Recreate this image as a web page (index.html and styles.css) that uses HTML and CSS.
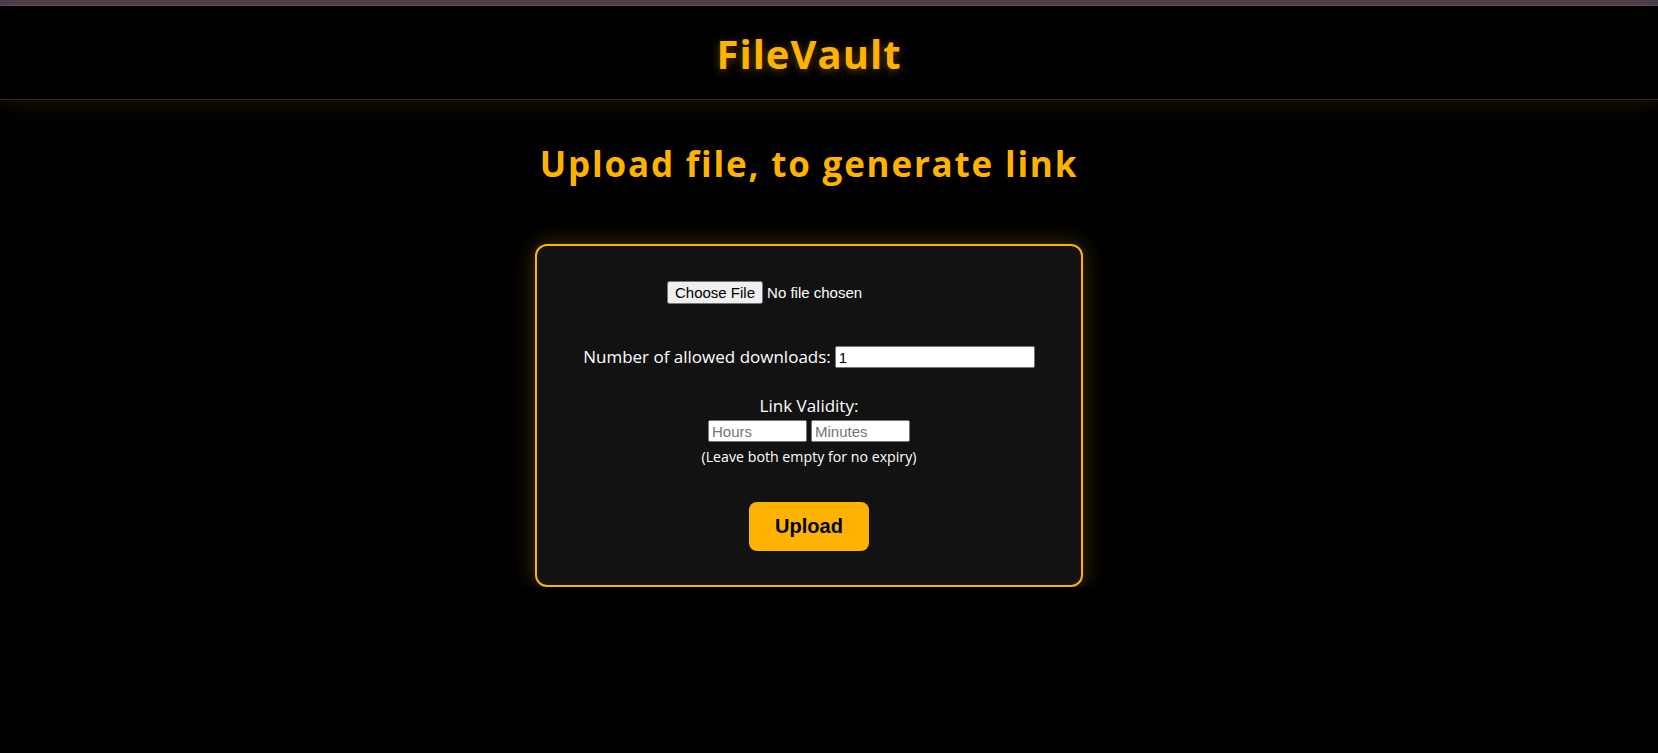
FILE: index.html
```html
<!DOCTYPE html>
<html lang="en">
<head>
<meta charset="utf-8">
<title>FileVault</title>
<link rel="stylesheet" href="styles.css">
</head>
<body>
<div class="topstrip"></div>
<header class="site-header">
  <h1 class="brand">FileVault</h1>
</header>
<main class="main">
  <h2 class="page-title">Upload file, to generate link</h2>
  <form class="card">
    <div class="row row-file">
      <input type="file" class="file-input">
    </div>
    <div class="row row-downloads">
      <label class="label">Number of allowed downloads:</label>
      <input type="number" class="num-input" value="1">
    </div>
    <div class="row row-validity-label">
      <span class="label">Link Validity:</span>
    </div>
    <div class="row row-validity">
      <input type="number" class="small-input" placeholder="Hours">
      <input type="number" class="small-input" placeholder="Minutes">
    </div>
    <div class="row row-note">
      <span class="note">(Leave both empty for no expiry)</span>
    </div>
    <div class="row row-button">
      <button type="button" class="upload-btn">Upload</button>
    </div>
  </form>
</main>
</body>
</html>
```
FILE: styles.css
```css
html, body {
  margin: 0;
  padding: 0;
  background: #000;
  color: #fff;
  font-family: "Open Sans", "Noto Sans", sans-serif;
}

.topstrip {
  height: 5px;
  background: #4a394c;
  border-bottom: 1px solid #5c4b5e;
}

.site-header {
  padding: 24px 40px 21px 0;
  border-bottom: 1px solid #3a2a05;
  box-shadow: 0 2px 20px rgba(255, 179, 0, 0.12);
  text-align: center;
}

.brand {
  margin: 0;
  font-size: 40px;
  line-height: 1.2;
  font-weight: 700;
  color: #ffb300;
  letter-spacing: 1px;
  text-shadow: 0 2px 10px rgba(255, 179, 0, 0.35);
}

.main {
  padding: 43px 40px 0 0;
  display: flex;
  flex-direction: column;
  align-items: center;
}

.page-title {
  margin: 0;
  font-size: 35px;
  line-height: 1.2;
  font-weight: 700;
  color: #ffb300;
  letter-spacing: 1.8px;
}

.card {
  margin-top: 59px;
  width: 548px;
  box-sizing: border-box;
  background: #121212;
  border: 2px solid #ffb300;
  border-radius: 12px;
  box-shadow: 0 0 22px rgba(255, 179, 0, 0.28);
  padding: 35px 20px 34px 20px;
  display: flex;
  flex-direction: column;
  align-items: center;
}

.row {
  display: flex;
  align-items: center;
  justify-content: center;
}

.row-file {
  height: 23px;
}

.file-input {
  font-family: "Liberation Sans", Arial, sans-serif;
  font-size: 15px;
  color: #fff;
}

.row-downloads {
  margin-top: 41px;
  gap: 4px;
}

.label {
  font-size: 17px;
  line-height: 24px;
  color: #fff;
}

.num-input {
  width: 200px;
  height: 22px;
  box-sizing: border-box;
  font-family: "Liberation Sans", Arial, sans-serif;
  font-size: 15px;
}

.row-validity-label {
  margin-top: 25px;
}

.row-validity {
  margin-top: 2px;
  gap: 4px;
}

.small-input {
  width: 99px;
  height: 22px;
  box-sizing: border-box;
  font-family: "Liberation Sans", Arial, sans-serif;
  font-size: 15px;
}

.row-note {
  margin-top: 5px;
}

.note {
  font-size: 14.2px;
  line-height: 20px;
  color: #fff;
}

.row-button {
  margin-top: 35px;
}

.upload-btn {
  background: #ffb300;
  color: #000;
  border: none;
  border-radius: 8px;
  padding: 13px 26px;
  font-family: "Liberation Sans", Arial, sans-serif;
  font-size: 20px;
  font-weight: 700;
  line-height: 23px;
  cursor: pointer;
}
```
